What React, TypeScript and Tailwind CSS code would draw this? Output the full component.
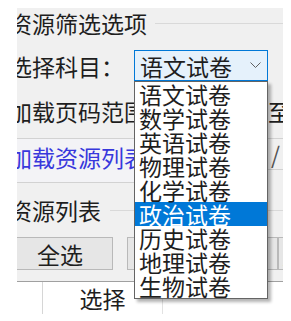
import React from 'react';

const items = ['语文试卷', '数学试卷', '英语试卷', '物理试卷', '化学试卷', '政治试卷', '历史试卷', '地理试卷', '生物试卷'];

export default function App() {
  return (
    <div className="w-[291px] h-[321px] bg-white overflow-hidden pt-[8px] pl-[17px] font-['Noto_Sans_CJK_SC',sans-serif]">
      <div className="relative w-[266px] h-[313px] bg-[#f0f0f0] overflow-hidden flex flex-col text-[23px] text-[#1e1e1e]">
        {/* group title */}
        <div className="mt-[1px] h-[28px] flex items-center -ml-[8px] shrink-0">
          <span className="leading-[28px] whitespace-nowrap">资源筛选选项</span>
          <div className="ml-[8px] flex-1 h-px bg-[#d9d9d9]" />
        </div>
        {/* subject row */}
        <div className="mt-[13px] h-[31px] flex items-center -ml-[8px] shrink-0">
          <span className="leading-[28px] whitespace-nowrap w-[115px] shrink-0">选择科目：</span>
          <div className="ml-[10px] w-[134px] h-[31px] border border-[#0078d7] bg-[#e5f1fb] flex items-center pl-[5px] shrink-0">
            <span className="leading-[28px] whitespace-nowrap">语文试卷</span>
            <svg className="ml-auto mr-[6px]" width="11" height="7" viewBox="0 0 11 7">
              <polyline points="0.5,0.5 5.5,5.5 10.5,0.5" fill="none" stroke="#606060" strokeWidth="1" />
            </svg>
          </div>
        </div>
        {/* page range row */}
        <div className="mt-[16px] h-[28px] flex items-center -ml-[8px] shrink-0 whitespace-nowrap">
          <span className="leading-[28px] w-[138px] shrink-0">加载页码范围</span>
          <span className="leading-[28px] ml-[121px] shrink-0">至</span>
        </div>
        {/* load row */}
        <div className="mt-[13px] h-[45px] flex items-start shrink-0">
          <div className="-ml-[8px] w-[150px] h-[45px] shrink-0 border-y border-[#d2d2d2] bg-[#f3f3f6] flex items-center">
            <span className="leading-[28px] whitespace-nowrap text-[#3838dc] -mt-[8px]">加载资源列表</span>
          </div>
          <div className="ml-[109px] w-[40px] h-[32px] shrink-0 border-y border-[#d2d2d2] flex items-center pl-[3px]">
            <span className="leading-[28px] text-[#555]">/</span>
          </div>
        </div>
        {/* resource list group title */}
        <div className="mt-[13px] h-[28px] flex items-center -ml-[8px] shrink-0">
          <span className="leading-[28px] whitespace-nowrap">资源列表</span>
          <div className="ml-[9px] flex-1 h-px bg-[#d9d9d9]" />
        </div>
        {/* buttons */}
        <div className="mt-[13px] h-[33px] flex shrink-0 whitespace-nowrap">
          <div className="-ml-[10px] w-[106px] h-[33px] shrink-0 border border-[#b9b9b9] bg-[#e6e6e6] flex items-center justify-center">
            <span className="leading-[28px]">全选</span>
          </div>
          <div className="ml-[14px] w-[151px] h-[33px] shrink-0 border border-[#b9b9b9] bg-[#e6e6e6] flex items-center justify-center">
            <span className="leading-[28px]">取消全选</span>
          </div>
          <div className="w-[100px] h-[33px] shrink-0 border border-[#b9b9b9] bg-[#e6e6e6] flex items-center pl-[3px]">
            <span className="leading-[28px]">反选</span>
          </div>
        </div>
        {/* table */}
        <div className="mt-[11px] flex-1 bg-white border-t border-[#a0a0a0] -ml-[10px] w-[300px]">
          <div className="h-[32px] flex">
            <div className="w-[36px] h-full border-r border-[#d6d6d6] shrink-0" />
            <div className="w-[120px] h-full border-r border-[#e2e2e2] shrink-0 flex items-center justify-center">
              <span className="leading-[28px]">选择</span>
            </div>
          </div>
        </div>

        {/* dropdown list overlay */}
        <div className="absolute left-[117px] top-[73px] w-[134px] h-[218px] bg-white border border-[#646464] shadow-[3px_3px_3px_rgba(0,0,0,0.3)]">
          {items.map((it, i) => (
            <div
              key={it}
              className={
                i === 5
                  ? 'h-[24px] leading-[24px] pl-[4px] whitespace-nowrap bg-[#0078d7] text-white'
                  : 'h-[24px] leading-[24px] pl-[4px] whitespace-nowrap'
              }
            >
              {it}
            </div>
          ))}
        </div>
      </div>
    </div>
  );
}
